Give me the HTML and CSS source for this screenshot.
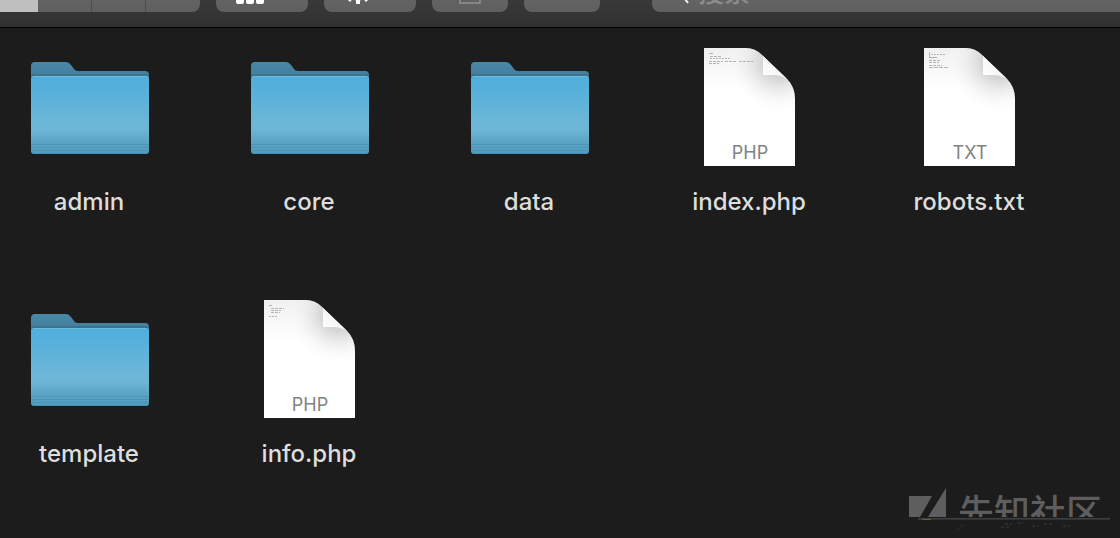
FILE: index.html
```html
<!DOCTYPE html>
<html lang="zh-CN">
<head>
<meta charset="utf-8">
<title>Finder</title>
<link rel="stylesheet" href="styles.css">
</head>
<body>
<svg class="defs" aria-hidden="true">
  <defs>
    <linearGradient id="front" x1="0" y1="0" x2="0" y2="1">
      <stop offset="0" stop-color="#51aedb"/>
      <stop offset=".15" stop-color="#54b0db"/>
      <stop offset=".6" stop-color="#6db7d8"/>
      <stop offset=".7" stop-color="#6cb5d5"/>
      <stop offset=".86" stop-color="#5ba2c2"/>
      <stop offset="1" stop-color="#519cbe"/>
    </linearGradient>
    <linearGradient id="back" x1="0" y1="0" x2="0" y2="1">
      <stop offset="0" stop-color="#4888a9"/>
      <stop offset="1" stop-color="#437c98"/>
    </linearGradient>
    <linearGradient id="paper" x1="0" y1="0" x2="0" y2="1">
      <stop offset="0" stop-color="#f0f0f0"/>
      <stop offset=".35" stop-color="#ffffff"/>
    </linearGradient>
    <radialGradient id="shade" gradientUnits="userSpaceOnUse" cx="94" cy="18" r="52">
      <stop offset="0" stop-color="#c0c0c0"/>
      <stop offset=".35" stop-color="#d0d0d0" stop-opacity=".8"/>
      <stop offset=".65" stop-color="#e6e6e6" stop-opacity=".45"/>
      <stop offset="1" stop-color="#ffffff" stop-opacity="0"/>
    </radialGradient>
    <linearGradient id="fold" x1="0" y1="1" x2=".6" y2=".4">
      <stop offset="0" stop-color="#ffffff"/>
      <stop offset="1" stop-color="#f4f4f4"/>
    </linearGradient>
    <symbol id="folder" viewBox="0 0 128 128">
      <path d="M6 36V22q0-4 4-4h31q3 0 5 3l3 4q1 2 4 2h67q4 0 4 4v5z" fill="url(#back)"/>
      <path d="M6 34h118v-2q0-2-2-2H8q-2 0-2 2z" fill="#38647b" opacity=".5"/>
      <rect x="6" y="32" width="118" height="78" rx="3" fill="url(#front)"/>
      <path d="M8 32.500h114" stroke="#72c2e6" opacity=".7"/>
      <path d="M6 100.500h118M6 103.500h118M6 106.500h118" stroke="#3e8bb0" opacity=".5"/>
      <path d="M8 109.500h114" stroke="#468faf"/>
    </symbol>
    <symbol id="page" viewBox="0 0 128 128">
      <path d="M19 4h42q9 0 16 7l25 24q8 8 8 20v67H19z" fill="url(#paper)"/>
      <path d="M19 4h42q9 0 16 7l25 24q8 8 8 20v67H19z" fill="url(#shade)"/>
      <path d="M78 12v18q0 1 1 1h10q7 0 13 4z" fill="url(#fold)"/>
    </symbol>
  </defs>
</svg>

<header class="toolbar">
  <div class="segments">
    <button class="segment segment-on" aria-label="Icons"></button>
    <button class="segment" aria-label="List"></button>
    <button class="segment" aria-label="Columns"></button>
    <button class="segment" aria-label="Gallery"></button>
  </div>
  <button class="tool tool-wide" aria-label="Group">
    <svg width="52" height="44" viewBox="0 0 52 44"><path d="M0 14h8v8H0zM10 14h8v8h-8zM20 14h8v8h-8z" fill="#ddd"/><g fill="#fff"><rect y="27" width="8" height="9" rx="2"/><rect x="10" y="27" width="8" height="9" rx="2"/><rect x="20" y="27" width="8" height="9" rx="2"/></g></svg>
  </button>
  <button class="tool tool-wide" aria-label="Action">
    <svg width="52" height="44" viewBox="0 0 52 44"><circle cx="14" cy="22" r="9" fill="none" stroke="#fff" stroke-width="3"/><path d="M14 30v6" stroke="#fff" stroke-width="4"/><path d="M8 29l-3 4M20 29l3 4" stroke="#fff" stroke-width="3"/></svg>
  </button>
  <button class="tool" aria-label="Share">
    <svg width="24" height="44" viewBox="0 0 24 44"><path d="M6 17H2v18h20V17h-4" fill="none" stroke="#858585" stroke-width="2"/></svg>
  </button>
  <button class="tool" aria-label="Tags"></button>
  <label class="search">
    <svg width="26" height="44" viewBox="0 0 26 44"><circle cx="7" cy="20" r="8" fill="none" stroke="#eee" stroke-width="2"/><path d="M10 27l6 8" stroke="#f4f4f4" stroke-width="2"/></svg>
    <input type="search" placeholder="搜索" aria-label="搜索">
  </label>
</header>

<main class="files">
  <figure class="file"><svg class="icon"><use href="#folder"/></svg><figcaption>admin</figcaption></figure>
  <figure class="file"><svg class="icon"><use href="#folder"/></svg><figcaption>core</figcaption></figure>
  <figure class="file"><svg class="icon"><use href="#folder"/></svg><figcaption>data</figcaption></figure>
  <figure class="file"><svg class="icon" viewBox="0 0 128 128"><use href="#page"/><g class="print"><path d="M24 9.500h4" /><path d="M25 12.500h12" stroke-dasharray="3 1"/><path d="M25 14.500h21" stroke-dasharray="2 1"/><path d="M24 17.500h14M40 17.500h12M54 17.500h14" stroke-dasharray="3 1"/><path d="M24 19.500h10" stroke-dasharray="3 1"/></g><text class="kind" x="65" y="115">PHP</text></svg><figcaption>index.php</figcaption></figure>
  <figure class="file"><svg class="icon" viewBox="0 0 128 128"><use href="#page"/><g class="print"><path d="M24.500 8v5"/><path d="M26 10.500h15" stroke-dasharray="2 1"/><path d="M24 13.500h8"/><path d="M24 16.500h11M24 18.500h10M24 21.500h13" stroke-dasharray="3 1"/><path d="M24 23.500h19" stroke-dasharray="4 1"/></g><text class="kind" x="65" y="115">TXT</text></svg><figcaption>robots.txt</figcaption></figure>
  <figure class="file"><svg class="icon"><use href="#folder"/></svg><figcaption>template</figcaption></figure>
  <figure class="file"><svg class="icon" viewBox="0 0 128 128"><use href="#page"/><g class="print"><path d="M24 9.500h3"/><path d="M26 12.500h13M26 14.500h10M26 16.500h9" stroke-dasharray="3 1"/><path d="M24 20.500h8" stroke-dasharray="2 1"/></g><text class="kind" x="65" y="115">PHP</text></svg><figcaption>info.php</figcaption></figure>
</main>

<aside class="watermark">
  <svg class="mark" width="38" height="30" viewBox="0 0 38 30" aria-hidden="true"><path d="M1 8h23L12 29H1zM38 0v29H20z" fill="#5e5e5e"/></svg>
  <span class="brand">先知社区</span>
  <svg class="traces" width="192" height="12" viewBox="0 0 192 12" aria-hidden="true"><path d="M0 .5h192" stroke="#3e3f40"/><path d="M0 1.500h192" stroke="#303132"/><path d="M4 1.500h9" stroke="#66612f"/><path d="M45 7l-5 4M87 6h7m-11 3h9m8-4h6m8 3h7m5-2h8m11 2h7" fill="none" stroke="#333b38" stroke-dasharray="3 2"/></svg>
</aside>
</body>
</html>
```
FILE: styles.css
```css
* { box-sizing: border-box; }

body {
  margin: 0;
  min-height: 100vh;
  background: #1c1c1c;
  color: #dedede;
  font-family: Inter, "Noto Sans CJK SC", sans-serif;
  overflow: hidden;
}

.defs { position: absolute; width: 0; height: 0; }

.toolbar {
  display: flex;
  align-items: flex-end;
  gap: 16px;
  height: 28px;
  padding-bottom: 15px;
  overflow: hidden;
  background: linear-gradient(#393939, #303030);
  border-bottom: 1px solid #000;
}

.segments { display: flex; flex: none; }

.segment, .tool {
  flex: none;
  height: 44px;
  padding: 0;
  border: 0;
  background: linear-gradient(#6c6c6c, #5f5f5f);
}

.segment { width: 54px; border-left: 1px solid #4c4c4c; }
.segment-on { width: 38px; border: 0; background: #bfbfbf; }
.segment-on + .segment { width: 53px; border: 0; }
.segment:last-child { width: 55px; border-bottom-right-radius: 8px; }

.tool { width: 76px; border-radius: 8px; }
.tool-wide { width: 92px; }
.tool svg { display: block; margin: 0 auto; }

.search {
  display: flex;
  align-items: center;
  flex: 1;
  min-width: 0;
  height: 44px;
  margin-left: 36px;
  padding-left: 20px;
  border-radius: 8px 0 0 8px;
  background: linear-gradient(#6c6c6c, #606060);
}

.search svg { flex: none; }

.search input {
  flex: 1;
  min-width: 0;
  height: 44px;
  padding: 0;
  border: 0;
  background: none;
  font: 500 26px "Noto Sans CJK SC", sans-serif;
}

.search input::placeholder { color: #8c8c8c; }

.files {
  display: grid;
  grid-template-columns: repeat(auto-fill, 178px);
  gap: 76px 42px;
  padding-top: 16px;
}

.file {
  display: flex;
  flex-direction: column;
  align-items: center;
  gap: 12px;
  margin: 0;
}

.icon { width: 128px; height: 128px; }

.file figcaption {
  height: 36px;
  font-size: 24px;
  font-weight: 500;
  line-height: 36px;
}

.kind {
  fill: #828282;
  font-size: 18px;
  text-anchor: middle;
}

.print path { stroke: #999; opacity: .7; }

.watermark {
  position: absolute;
  right: 10px;
  bottom: 8px;
  display: grid;
  grid-template-columns: 38px 152px;
  column-gap: 12px;
  color: #5e5e5e;
}

.brand {
  height: 29px;
  overflow: hidden;
  font: 500 36px/44px "Noto Sans CJK SC", sans-serif;
}

.traces { grid-column: 1 / -1; justify-self: end; }
```
